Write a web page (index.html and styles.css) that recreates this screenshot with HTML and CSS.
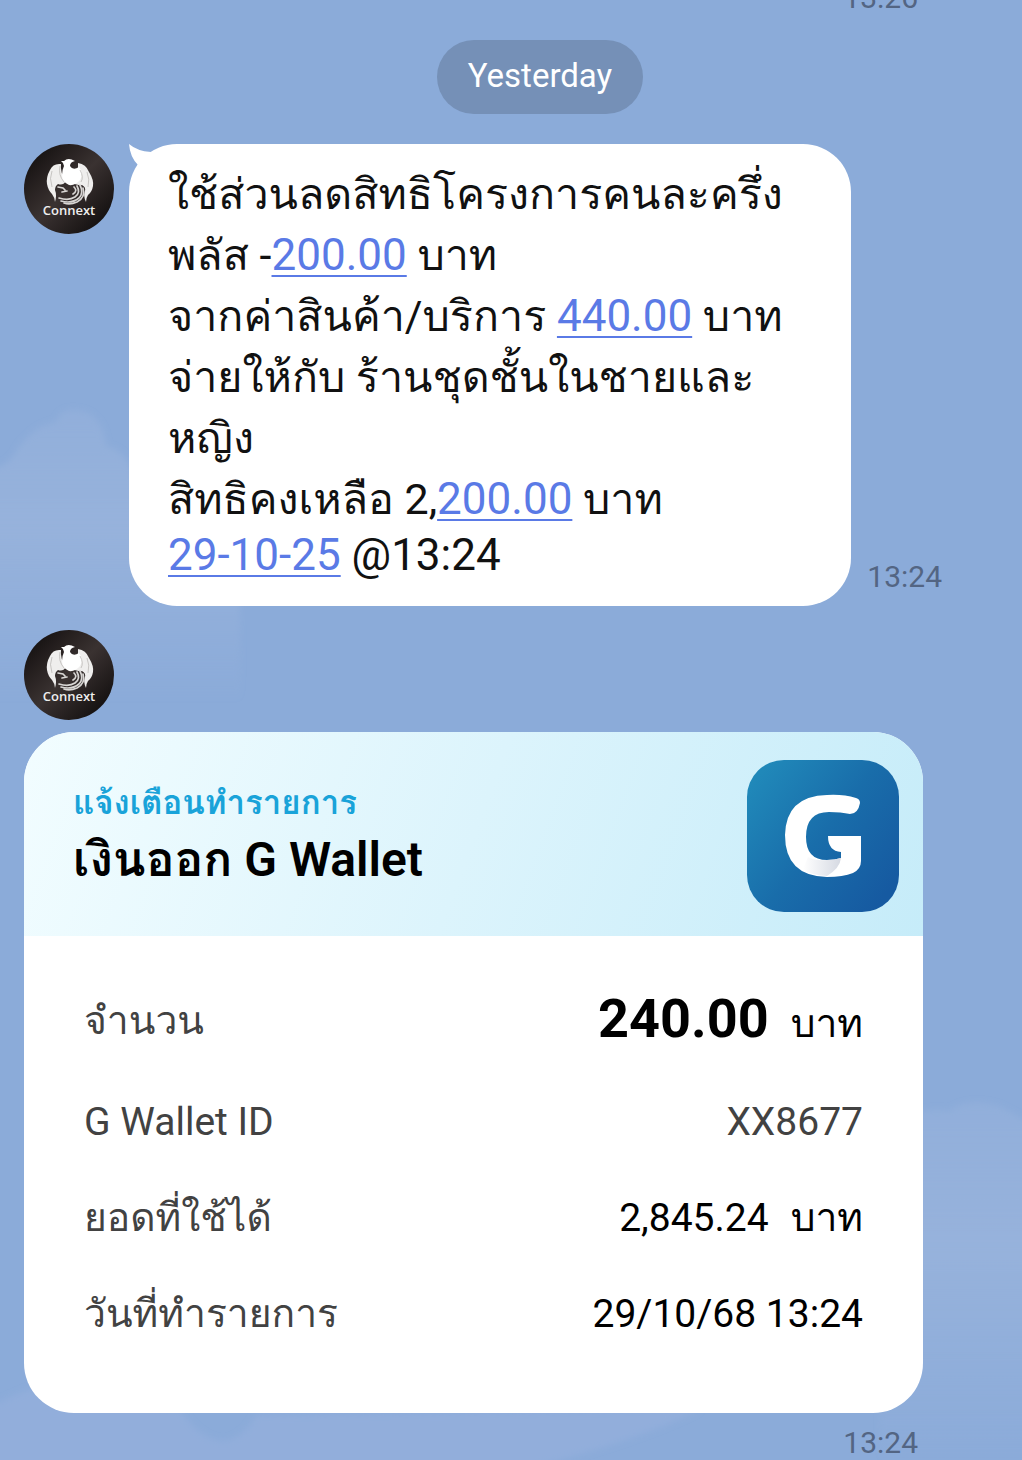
FILE: index.html
```
<!DOCTYPE html>
<html lang="th">
<head>
    <meta charset="UTF-8">
    <meta name="viewport" content="width=device-width, initial-scale=1.0">
    <title>Connext</title>

    <link rel="stylesheet" href="styles.css">
</head>
<body>

    <!-- sky wallpaper -->
    <svg class="sky" viewBox="0 0 1022 1460" preserveAspectRatio="none" aria-hidden="true">
        <defs>
            <linearGradient id="cloudFade" x1="0" y1="0" x2="0" y2="1">
                <stop offset="0" stop-color="#98b3dc" stop-opacity="0.5"/>
                <stop offset="0.4" stop-color="#98b3dc" stop-opacity="0.9"/>
                <stop offset="1" stop-color="#98b3dc" stop-opacity="0"/>
            </linearGradient>
            <filter id="soft"><feGaussianBlur stdDeviation="3"/></filter>
        </defs>
        <g fill="url(#cloudFade)" filter="url(#soft)">
            <path d="M-20 470 Q10 468 18 448 Q36 424 56 422 Q62 404 86 412 Q104 420 106 446 Q128 450 134 478 L240 520 V700 H-20Z"/>
            <path d="M880 1120 Q920 1106 950 1110 Q970 1096 1000 1106 Q1014 1112 1040 1130 V1460 H880Z"/>
        </g>
        <path fill="#92aedb" filter="url(#soft)" d="M-20 1410 Q10 1396 30 1388 L180 1408 Q200 1440 225 1440 Q245 1436 256 1414 L700 1408 Q640 1440 500 1475 H-20Z"/>
    </svg>

    <svg class="symbols" aria-hidden="true">
        <defs>
            <linearGradient id="avatarShade" x1="0" y1="0" x2="1" y2="1">
                <stop offset="0.1" stop-color="#151111"/>
                <stop offset="0.5" stop-color="#3a3231"/>
                <stop offset="0.85" stop-color="#171313"/>
            </linearGradient>
        </defs>
        <symbol id="bird" viewBox="0 0 90 90">
            <circle cx="45" cy="45" r="45" fill="url(#avatarShade)"/>
            <!-- wings, then head and breast -->
            <path fill="#efeeed" d="M37 20 Q29 19 26 26 Q22 33 23 40 Q24 46 28 50 Q31 54 31 58 Q33 51 31 46 Q31 42 34 40 Q39 42 42 37 Q36 29 37 20Z"/>
            <path fill="#efeeed" d="M54 19 Q62 20 65 28 Q70 36 69 42 Q68 48 64 51 Q62 54 62 58 Q59 52 61 47 Q62 43 58 41 Q52 42 47 38 Q52 30 54 25Z"/>
            <path fill="#fff" d="M37 17 L40 17 Q44 13 51 17 Q46 18 46 22 Q49 27 55 23 Q60 29 56 36 Q51 42 45 41 Q38 38 38 31 Q38 26 40 22 Q40 19 37 17Z"/>
            <path fill="none" stroke="#b5b1af" stroke-width="0.7" d="M28 27 Q25 34 28 43 M63 28 Q66 35 64 43 M36 22 Q34 31 40 38 M56 26 Q60 33 57 38"/>
            <!-- tail feathers -->
            <g fill="none" stroke="#d8d6d4" stroke-width="1.7" stroke-linecap="round">
                <path d="M56 41 Q60 49 55 54 Q48 60 37 57"/>
                <path d="M53 42 Q57 49 51 53 Q45 57 35 54"/>
                <path d="M59 44 Q62 53 53 58 Q46 61 40 59"/>
                <path d="M50 43 Q54 47 49 50"/>
                <path d="M34 43 L39 44 L41 46 M38 48 L43 47"/>
            </g>
        </symbol>
    </svg>

    <main class="chat">
        <div class="previous"><time>13:26</time></div>

        <div class="date"><span>Yesterday</span></div>

        <section class="message">
            <svg class="avatar" viewBox="0 0 90 90">
                <use href="#bird"/>
                <text x="45" y="71" text-anchor="middle">Connext</text>
            </svg>
            <div class="bubble">
                <svg class="tail" viewBox="0 0 30 34" aria-hidden="true"><path fill="#fff" d="M0 0 Q8 7 22 8 L28 16 L12 28 L9 21 Q1 13 0 0Z"/></svg>
                <p>ใช้ส่วนลดสิทธิโครงการคนละครึ่ง<br>พลัส -<a href="#">200.00</a> บาท</p>
                <p>จากค่าสินค้า/บริการ <a href="#">440.00</a> บาท</p>
                <p>จ่ายให้กับ ร้านชุดชั้นในชายและ<br>หญิง</p>
                <p>สิทธิคงเหลือ 2,<a href="#">200.00</a> บาท</p>
                <p class="stamp"><a href="#">29-10-25</a> @13:24</p>
            </div>
            <time>13:24</time>
        </section>

        <section class="notice">
            <svg class="avatar" viewBox="0 0 90 90">
                <use href="#bird"/>
                <text x="45" y="71" text-anchor="middle">Connext</text>
            </svg>
            <article class="card">
                <header class="card-header">
                    <div>
                        <p class="subtitle">แจ้งเตือนทำรายการ</p>
                        <h1>เงินออก G Wallet</h1>
                    </div>
                    <svg class="logo" viewBox="0 0 152 152" role="img" aria-label="G Wallet">
                        <defs>
                            <linearGradient id="logoBlue" x1="0" y1="0.2" x2="0.9" y2="0.9">
                                <stop offset="0" stop-color="#2088b9"/>
                                <stop offset="0.5" stop-color="#196daa"/>
                                <stop offset="1" stop-color="#165aa1"/>
                            </linearGradient>
                            <linearGradient id="logoFold" x1="0" y1="0" x2="1" y2="0">
                                <stop offset="0" stop-color="#fff"/>
                                <stop offset="1" stop-color="#d5d9e2"/>
                            </linearGradient>
                        </defs>
                        <rect width="152" height="152" rx="37" fill="url(#logoBlue)"/>
                        <path fill="#fff" d="M109 38 Q113 39 113 43 Q111 54 103 54 Q94 52 82 52 Q59 52 59 77 Q59 100 80 100 Q88 100 94 98 V92 Q81 91 81 76 H114 V101 Q114 109 106 113 Q96 117 80 117 Q38 116 38 75 Q39 36 80 35 Q96 34 109 38Z"/>
                        <path fill="url(#logoFold)" d="M61 97 Q68 101 80 100 Q88 100 94 98 Q93 108 80 116 Q63 115 56 109Z"/>
                    </svg>
                </header>
                <table class="details">
                    <tr class="amount">
                        <th scope="row">จำนวน</th>
                        <td><strong>240.00</strong><span class="unit">บาท</span></td>
                    </tr>
                    <tr class="wallet">
                        <th scope="row">G Wallet ID</th>
                        <td>XX8677</td>
                    </tr>
                    <tr>
                        <th scope="row">ยอดที่ใช้ได้</th>
                        <td>2,845.24<span class="unit">บาท</span></td>
                    </tr>
                    <tr>
                        <th scope="row">วันที่ทำรายการ</th>
                        <td>29/10/68 13:24</td>
                    </tr>
                </table>
            </article>
            <time>13:24</time>
        </section>
    </main>

</body>
</html>
```
FILE: styles.css
```
* {
    margin: 0;
    padding: 0;
    box-sizing: border-box;
}

body {
    position: relative;
    min-height: 100vh;
    overflow-x: hidden;
    font-family: Roboto, Loma, sans-serif;
    background-color: #8babd9;
    color: #111;
}

.sky {
    position: absolute;
    top: 0;
    left: 0;
    width: 100%;
    height: 100%;
}

.symbols {
    position: absolute;
    width: 0;
    height: 0;
}

.chat {
    position: relative;
    padding: 0 24px;
}

time {
    font-size: 30px;
    line-height: 36px;
    color: #536583;
}

.previous {
    display: flex;
    justify-content: flex-end;
    align-items: flex-end;
    height: 16px;
    padding-right: 80px;
    overflow: hidden;
}

.date {
    display: flex;
    justify-content: center;
    padding: 24px 0 30px 58px;
}

.date span {
    padding: 15px 31px 17px;
    border-radius: 37px;
    background-color: #7590b7;
    color: #fff;
    font-size: 33px;
    line-height: 42px;
}

.avatar {
    display: block;
    flex: none;
    width: 90px;
    height: 90px;
}

.avatar text {
    fill: #eee;
    font-family: "Open Sans", sans-serif;
    font-size: 13px;
    font-weight: 600;
}

.message {
    display: flex;
    align-items: flex-start;
    padding-right: 56px;
}

.message time {
    align-self: flex-end;
    margin: 0 0 11px 16px;
}

.bubble {
    position: relative;
    flex: 1;
    margin-left: 15px;
    padding: 20px 39px 25px;
    border-radius: 48px;
    background-color: #fff;
    font-size: 43px;
    line-height: 61px;
}

.bubble a {
    color: #5a7ae6;
    font-size: 44px;
    text-decoration-thickness: 2px;
    text-underline-offset: 5px;
}

.bubble .stamp {
    font-size: 44px;
    line-height: 51px;
}

.tail {
    position: absolute;
    top: 0;
    left: 0;
    width: 30px;
    height: 34px;
}

.notice {
    padding: 24px 75px 0 0;
}

.notice time {
    display: block;
    margin-top: 12px;
    padding-right: 5px;
    text-align: right;
}

.card {
    margin-top: 12px;
    border-radius: 50px;
    background-color: #fff;
    overflow: hidden;
}

.card-header {
    display: flex;
    justify-content: space-between;
    align-items: center;
    height: 204px;
    padding: 3px 24px 0 49px;
    background: linear-gradient(110deg, #f2fdff, #dcf4fc 50%, #c6ecf9);
}

.subtitle {
    color: #19a3d9;
    font-size: 33px;
    font-weight: 700;
    line-height: 48px;
}

h1 {
    color: #000;
    font-size: 48px;
    font-weight: 600;
    line-height: 66px;
}

.logo {
    flex: none;
    width: 152px;
    height: 152px;
}

.details {
    width: 100%;
    border-collapse: separate;
    border-spacing: 0;
    padding: 32px 60px 51px;
    font-size: 39px;
    line-height: 56px;
}

.details tr {
    height: 96px;
}

.details .amount {
    height: 106px;
}

.details th {
    color: #424242;
    font-weight: 400;
    text-align: left;
}

.details td {
    color: #000;
    text-align: right;
}

.details .wallet td {
    color: #424242;
}

.details strong {
    font-size: 54px;
}

.unit {
    margin-left: 22px;
}
```
